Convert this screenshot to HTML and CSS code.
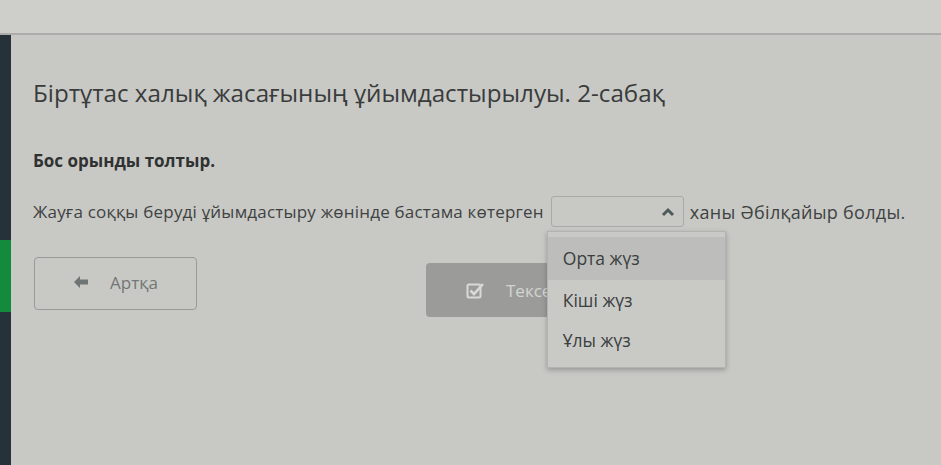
FILE: index.html
```html
<!DOCTYPE html>
<html lang="kk">
<head>
    <meta charset="UTF-8">
    <meta name="viewport" content="width=device-width, initial-scale=1.0">
    <title>Біртұтас халық жасағының ұйымдастырылуы</title>
    <link rel="stylesheet" href="styles.css">
</head>
<body>
    <div class="topbar"></div>
    <div class="layout">
        <div class="sidebar">
            <div class="sidebar-active"></div>
        </div>
        <div class="content">
            <h1>Біртұтас халық жасағының ұйымдастырылуы. 2-сабақ</h1>

            <div class="task">Бос орынды толтыр.</div>

            <div class="sentence">
                <span>Жауға соққы беруді ұйымдастыру жөнінде бастама көтерген</span>
                <div class="select">
                    <div class="select-box">
                        <svg class="chevron" width="14" height="10" viewBox="0 0 14 10">
                            <path d="M2 8 L7 3 L12 8" fill="none" stroke="#4f5a5a" stroke-width="3"/>
                        </svg>
                    </div>
                    <ul class="dropdown">
                        <li class="active">Орта жүз</li>
                        <li>Кіші жүз</li>
                        <li>Ұлы жүз</li>
                    </ul>
                </div>
                <span class="tail">ханы Әбілқайыр болды.</span>
            </div>

            <div class="actions">
                <button class="btn btn-back">
                    <svg width="16" height="14" viewBox="0 0 16 14">
                        <path d="M7 1 L1 7 L7 13 L7 9.5 L15 9.5 L15 4.5 L7 4.5 Z" fill="#6f7474"/>
                    </svg>
                    Артқа
                </button>
                <button class="btn btn-check">
                    <svg width="19" height="17" viewBox="0 0 19 17">
                        <rect x="1.5" y="2.5" width="13" height="13" rx="1.5" fill="none" stroke="#d9d9d6" stroke-width="2"/>
                        <path d="M4.5 8.5 L8 12 L17 2" fill="none" stroke="#d9d9d6" stroke-width="2.6"/>
                    </svg>
                    Тексеру
                </button>
            </div>
        </div>
    </div>
</body>
</html>
```

FILE: styles.css
```css
body {
    margin: 0;
    font-family: 'Open Sans', 'Noto Sans', sans-serif;
    background: #c8c9c5;
    color: #3b3d3d;
    height: 465px;
    overflow: hidden;
}
.topbar {
    height: 33px;
    background: #cecfcb;
    border-bottom: 2px solid #acadaa;
}
.layout {
    display: flex;
    height: 430px;
}
.sidebar {
    width: 11px;
    background: #27313a;
    padding-top: 205px;
}
.sidebar-active {
    height: 72px;
    background: #138a3c;
}
.content {
    flex: 1;
    padding: 41px 0 0 22px;
}
h1 {
    margin: 0;
    font-size: 24.2px;
    font-weight: 400;
    line-height: 34px;
    color: #3a3c3c;
}
.task {
    margin-top: 39px;
    font-size: 17px;
    font-weight: 700;
    color: #303232;
}
.sentence {
    display: flex;
    align-items: center;
    margin-top: 24px;
    font-size: 17px;
    letter-spacing: 0.2px;
    color: #3f4242;
}
.tail {
    font-size: 18px;
    letter-spacing: 0.3px;
}
.select {
    position: relative;
    margin: 0 6px 0 7px;
}
.select-box {
    height: 29px;
    width: 123px;
    border: 1px solid #a9aaa7;
    border-radius: 3px;
    display: flex;
    align-items: center;
    justify-content: flex-end;
    padding-right: 8px;
}
.dropdown {
    position: absolute;
    top: 35px;
    left: -4px;
    width: 177px;
    margin: 0;
    padding: 5px 0 7px;
    list-style: none;
    background: #c9cac6;
    border: 1px solid #b3b4b1;
    box-shadow: 0 2px 5px rgba(0,0,0,0.25);
    z-index: 2;
}
.dropdown li {
    height: 40px;
    line-height: 40px;
    padding-left: 15px;
    font-size: 17.5px;
    letter-spacing: 0;
    color: #3b3e3e;
}
.dropdown li.active {
    background: #bdbebb;
    height: 43px;
    line-height: 43px;
}
.actions {
    display: flex;
    align-items: flex-start;
    margin-top: 30px;
    margin-left: 1px;
}
.btn {
    font-family: 'Open Sans', 'Noto Sans', sans-serif;
    font-size: 17px;
    display: flex;
    align-items: center;
    justify-content: center;
    gap: 21px;
    border-radius: 4px;
    cursor: pointer;
}
.btn-back {
    width: 163px;
    height: 53px;
    background: transparent;
    border: 1px solid #9a9b99;
    color: #727676;
    padding-bottom: 4px;
}
.btn-check {
    margin-left: 229px;
    margin-top: 6px;
    width: 220px;
    height: 54px;
    background: #9b9c99;
    border: none;
    color: #d4d5d2;
    justify-content: flex-start;
    padding-left: 40px;
}
```
